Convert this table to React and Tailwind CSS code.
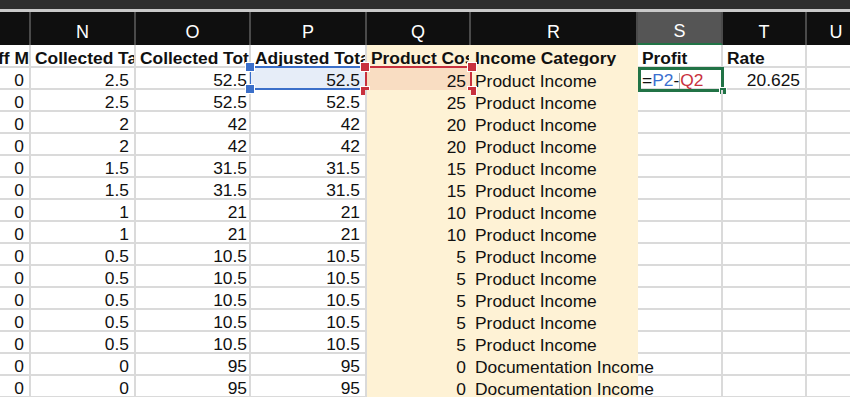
import React from 'react';

const COLS = [
    { id: 'M', w: 'w-[64px]', head: 'Staff Markup' },
    { id: 'N', w: 'w-[105px]', head: 'Collected Tax' },
    { id: 'O', w: 'w-[115px]', head: 'Collected Total' },
    { id: 'P', w: 'w-[116px]', head: 'Adjusted Total' },
    { id: 'Q', w: 'w-[104px]', head: 'Product Cost', cream: true },
    { id: 'R', w: 'w-[167px]', head: 'Income Category', cream: true },
    { id: 'S', w: 'w-[85px]', head: 'Profit' },
    { id: 'T', w: 'w-[84px]', head: 'Rate' },
    { id: 'U', w: 'w-[60px]', head: '' },
];

const N = [2.5, 2.5, 2, 2, 1.5, 1.5, 1, 1, 0.5, 0.5, 0.5, 0.5, 0.5, 0, 0];
const O = [52.5, 52.5, 42, 42, 31.5, 31.5, 21, 21, 10.5, 10.5, 10.5, 10.5, 10.5, 95, 95];
const Q = [25, 25, 20, 20, 15, 15, 10, 10, 5, 5, 5, 5, 5, 0, 0];

const rows = N.map((n, i) => ({
    M: 0,
    N: n,
    O: O[i],
    P: O[i],
    Q: Q[i],
    R: i < 13 ? 'Product Income' : 'Documentation Income',
    T: i === 0 ? 20.625 : '',
}));

const Handle = ({ className }) => (
    <div className={'absolute w-[10px] h-[10px] border border-white ' + className} />
);

const App = () => {
    return (
        <div className="w-[850px] h-[397px] overflow-hidden bg-white text-[#111] font-['Liberation_Sans',Arial,sans-serif]">
            <div className="h-[9px] bg-[#2e2e2e]" />
            <div className="h-[3px] bg-[#c9c9c9]" />
            <div className="ml-[-33px]">
                {/* Column letters */}
                <div className="flex h-[33px] bg-[#0f0f0f]">
                    {COLS.map(c => (
                        <div
                            key={c.id}
                            className={
                                c.w +
                                ' shrink-0 flex items-center justify-center pt-[7px] text-white text-[18px] border-r-2 border-[#4a4a4a] ' +
                                (c.id === 'S' ? 'bg-[#555555] border-b-2 border-b-[#217346]' : '')
                            }
                        >
                            {c.id === 'M' ? '' : c.id}
                        </div>
                    ))}
                </div>

                {/* Row 1 titles */}
                <div className="flex h-[23px]">
                    {COLS.map(c => (
                        <div
                            key={c.id}
                            className={
                                c.w +
                                ' shrink-0 overflow-hidden whitespace-nowrap flex items-center pl-[4px] pt-[5px] text-[17.4px] font-bold border-b-2 border-r-2 ' +
                                (c.cream ? 'bg-[#fef2d5] border-[#fef2d5]' : 'border-[#dadada]')
                            }
                        >
                            {c.head}
                        </div>
                    ))}
                </div>

                {/* Data rows */}
                {rows.map((r, i) => (
                    <div key={i} className="flex h-[22px] text-[17.4px]">
                        <div className="w-[64px] shrink-0 flex items-center justify-end pr-[5px] pt-[5px] border-b-2 border-r-2 border-[#dadada]">{r.M}</div>
                        <div className="w-[105px] shrink-0 flex items-center justify-end pr-[5px] pt-[5px] border-b-2 border-r-2 border-[#dadada]">{r.N}</div>
                        <div className="w-[115px] shrink-0 flex items-center justify-end pr-[2px] pt-[5px] border-b-2 border-r-2 border-[#dadada]">{r.O}</div>
                        <div className={'w-[116px] shrink-0 relative flex items-center justify-end pr-[5px] pt-[5px] border-b-2 border-r-2 border-[#dadada] ' + (i === 0 ? 'bg-[#e6edf8]' : '')}>
                            {r.P}
                            {i === 0 && (
                                <>
                                    <div className="absolute left-0 right-0 top-[-2px] bottom-[-2px] border-y-2 border-[#3b6fc9]" />
                                    <div className="absolute left-[-1px] top-0 bottom-0 w-px bg-[#3b6fc9]" />
                                    <Handle className="bg-[#3b6fc9] left-[-6px] top-[-6px]" />
                                    <Handle className="bg-[#3b6fc9] left-[-6px] bottom-[-6px]" />
                                </>
                            )}
                        </div>
                        <div className={'w-[104px] shrink-0 relative flex items-center justify-end pr-[5px] pt-[5px] ' + (i === 0 ? 'bg-[#f9ddc2]' : 'bg-[#fef2d5]')}>
                            {r.Q}
                            {i === 0 && (
                                <>
                                    <div className="absolute left-[-2px] right-[-1px] top-[-2px] bottom-[-2px] border-2 border-[#c8313e]" />
                                    <Handle className="bg-[#c8313e] left-[-7px] top-[-6px]" />
                                    <Handle className="bg-[#c8313e] left-[-7px] bottom-[-6px]" />
                                    <Handle className="bg-[#c8313e] right-[-6px] top-[-6px]" />
                                    <Handle className="bg-[#c8313e] right-[-6px] bottom-[-6px]" />
                                </>
                            )}
                        </div>
                        <div className="w-[167px] shrink-0 flex items-center pl-[4px] pt-[5px] whitespace-nowrap bg-[#fef2d5]">{r.R}</div>
                        <div className="w-[85px] shrink-0 relative flex items-center pl-[4px] pt-[5px] border-b-2 border-r-2 border-[#dadada]">
                            {i === 0 && (
                                <>
                                    <span>=</span>
                                    <span className="text-[#3a6fd0]">P2</span>
                                    <span>-</span>
                                    <span className="w-px h-[16px] bg-[#b0b0b0]" />
                                    <span className="text-[#c8313e]">Q2</span>
                                    <div className="absolute left-0 right-[-3px] top-[-1px] bottom-[-4px] border-[3px] border-[#217346]" />
                                    <div className="absolute right-[-6px] bottom-[-7px] w-[8px] h-[8px] bg-[#217346] border border-white" />
                                </>
                            )}
                        </div>
                        <div className="w-[84px] shrink-0 flex items-center justify-end pr-[5px] pt-[5px] border-b-2 border-r-2 border-[#dadada]">{r.T}</div>
                        <div className="w-[60px] shrink-0 border-b-2 border-r-2 border-[#dadada]" />
                    </div>
                ))}
            </div>
        </div>
    );
};

export default App;
